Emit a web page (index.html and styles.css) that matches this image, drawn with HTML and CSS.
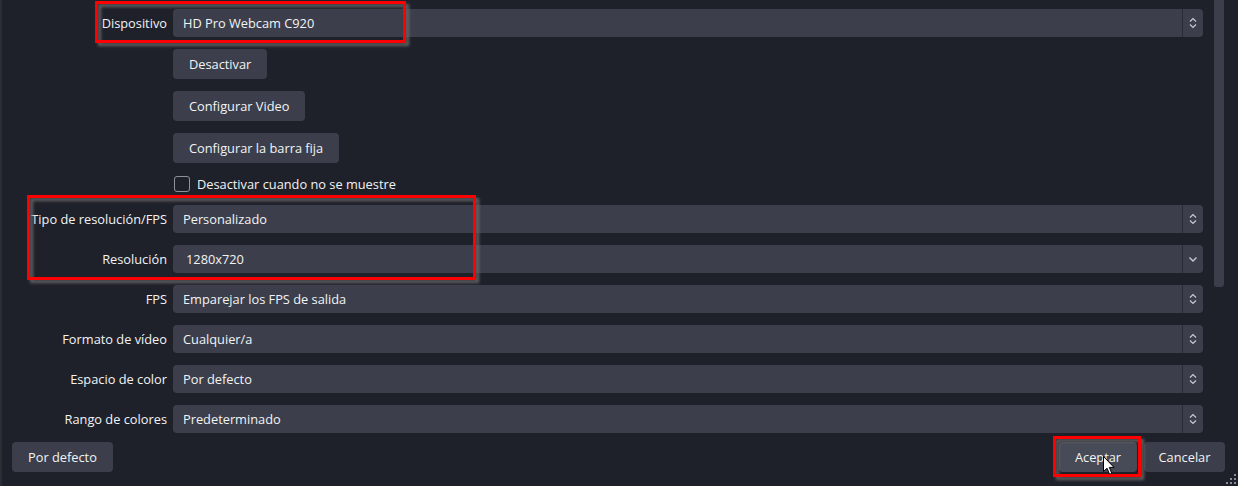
FILE: index.html
```html
<!DOCTYPE html>
<html lang="es">
<head>
<meta charset="utf-8">
<title>Propiedades</title>
<link rel="stylesheet" href="styles.css">
</head>
<body>
<div class="window">
  <div class="scroll">
    <div class="form">
      <div class="label">Dispositivo</div>
      <div class="combo"><span class="combo-text">HD Pro Webcam C920</span><span class="arrow"><svg width="8" height="12" viewBox="0 0 8 12"><path d="M1 4.5 L4 1.5 L7 4.5 M1 7.5 L4 10.5 L7 7.5" fill="none" stroke="#c9cad0" stroke-width="1.2"/></svg></span></div>

      <div class="label"></div>
      <div class="btn-row"><button class="btn">Desactivar</button></div>

      <div class="label"></div>
      <div class="btn-row"><button class="btn">Configurar Video</button></div>

      <div class="label"></div>
      <div class="btn-row"><button class="btn">Configurar la barra fija</button></div>

      <div class="label"></div>
      <div class="check-row"><span class="checkbox"></span><span>Desactivar cuando no se muestre</span></div>

      <div class="label">Tipo de resolución/FPS</div>
      <div class="combo"><span class="combo-text">Personalizado</span><span class="arrow"><svg width="8" height="12" viewBox="0 0 8 12"><path d="M1 4.5 L4 1.5 L7 4.5 M1 7.5 L4 10.5 L7 7.5" fill="none" stroke="#c9cad0" stroke-width="1.2"/></svg></span></div>

      <div class="label">Resolución</div>
      <div class="combo"><span class="combo-text edit">1280x720</span><span class="arrow"><svg width="10" height="8" viewBox="0 0 10 8"><path d="M1.5 2.5 L5 6 L8.5 2.5" fill="none" stroke="#c9cad0" stroke-width="1.4"/></svg></span></div>

      <div class="label">FPS</div>
      <div class="combo"><span class="combo-text">Emparejar los FPS de salida</span><span class="arrow"><svg width="8" height="12" viewBox="0 0 8 12"><path d="M1 4.5 L4 1.5 L7 4.5 M1 7.5 L4 10.5 L7 7.5" fill="none" stroke="#c9cad0" stroke-width="1.2"/></svg></span></div>

      <div class="label">Formato de vídeo</div>
      <div class="combo"><span class="combo-text">Cualquier/a</span><span class="arrow"><svg width="8" height="12" viewBox="0 0 8 12"><path d="M1 4.5 L4 1.5 L7 4.5 M1 7.5 L4 10.5 L7 7.5" fill="none" stroke="#c9cad0" stroke-width="1.2"/></svg></span></div>

      <div class="label">Espacio de color</div>
      <div class="combo"><span class="combo-text">Por defecto</span><span class="arrow"><svg width="8" height="12" viewBox="0 0 8 12"><path d="M1 4.5 L4 1.5 L7 4.5 M1 7.5 L4 10.5 L7 7.5" fill="none" stroke="#c9cad0" stroke-width="1.2"/></svg></span></div>

      <div class="label">Rango de colores</div>
      <div class="combo"><span class="combo-text">Predeterminado</span><span class="arrow"><svg width="8" height="12" viewBox="0 0 8 12"><path d="M1 4.5 L4 1.5 L7 4.5 M1 7.5 L4 10.5 L7 7.5" fill="none" stroke="#c9cad0" stroke-width="1.2"/></svg></span></div>
    </div>
    <div class="scrollbar"><div class="thumb"></div></div>
  </div>
  <div class="footer">
    <button class="btn">Por defecto</button>
    <div class="footer-right">
      <button class="btn hover btn-ok">Aceptar</button>
      <button class="btn btn-cancel">Cancelar</button>
    </div>
  </div>

  <div class="hl hl-1"></div>
  <div class="hl hl-2"></div>
  <div class="hl hl-3"></div>

  <svg class="cursor" width="13" height="20" viewBox="0 0 13 20"><path d="M0.5 0.5 L0.5 15.5 L4 12.2 L6.6 18.3 L8.8 17.3 L6.3 11.4 L11 11.4 Z" fill="#fff" stroke="#000" stroke-width="1"/></svg>

  <svg class="grip" width="10" height="10" viewBox="0 0 10 10"><g fill="#8a8d97"><rect x="8" y="0" width="2" height="2"/><rect x="4" y="4" width="2" height="2"/><rect x="8" y="4" width="2" height="2"/><rect x="0" y="8" width="2" height="2"/><rect x="4" y="8" width="2" height="2"/><rect x="8" y="8" width="2" height="2"/></g></svg>
</div>
</body>
</html>
```

FILE: styles.css
```css
* { box-sizing: border-box; }

html, body {
  margin: 0;
  padding: 0;
  background: #1f212a;
}

body {
  font-family: "Open Sans", "Noto Sans", sans-serif;
  font-size: 12.8px;
  color: #f2f3f5;
}

.window {
  position: relative;
  width: 1238px;
  height: 486px;
  background: #1f212a;
  border-left: 2px solid #2b2d36;
  overflow: hidden;
}

.scroll {
  display: flex;
  height: 436px;
}

.form {
  display: grid;
  grid-template-columns: 165px 1030px;
  grid-auto-rows: auto;
  column-gap: 6px;
  row-gap: 12px;
  padding-top: 9px;
  align-items: center;
  align-content: start;
}

.label {
  text-align: right;
  white-space: nowrap;
  line-height: 18px;
}

.combo {
  display: flex;
  height: 28px;
  background: #3c3f4b;
  border-radius: 4px;
  overflow: hidden;
}

.combo-text {
  flex: 1;
  padding-left: 10px;
  line-height: 28px;
  white-space: nowrap;
}

.combo-text.edit {
  padding-left: 13px;
}

.arrow {
  width: 21px;
  border-left: 1px solid #2a2c35;
  display: flex;
  align-items: center;
  justify-content: center;
}

.arrow svg { display: block; }

.btn-row {
  display: flex;
}

.btn {
  height: 30px;
  padding: 0 16px;
  background: #3c3f4b;
  border: none;
  border-radius: 4px;
  color: #f2f3f5;
  font-family: "Open Sans", "Noto Sans", sans-serif;
  font-size: 12.8px;
  line-height: 30px;
  white-space: nowrap;
}

.btn.hover {
  background: #474a57;
}

.btn-ok { width: 78px; padding: 0; }
.btn-cancel { width: 81px; padding: 0; }

.check-row {
  display: flex;
  align-items: center;
  gap: 7px;
  height: 18px;
  padding-left: 1px;
}

.checkbox {
  width: 16px;
  height: 16px;
  border: 1.5px solid #8f929b;
  border-radius: 3px;
}

.scrollbar {
  margin-left: 11px;
  width: 10px;
}

.thumb {
  width: 10px;
  height: 287px;
  background: #3c3f4b;
  border-radius: 0 0 3px 3px;
}

.footer {
  display: flex;
  justify-content: space-between;
  padding: 6px 13px 0 10px;
}

.footer-right {
  display: flex;
  gap: 7px;
}

.hl {
  position: absolute;
  border: 3px solid #ff0000;
  filter: drop-shadow(3px 3px 1.5px rgba(110, 110, 110, 0.85));
}

.hl-1 { left: 93px; top: 1px; width: 311px; height: 42px; }
.hl-2 { left: 25px; top: 195px; width: 449px; height: 85px; }
.hl-3 { left: 1051px; top: 436px; width: 88px; height: 41px; }

.cursor {
  position: absolute;
  left: 1101px;
  top: 456px;
}

.grip {
  position: absolute;
  left: 1224px;
  top: 474px;
}
```
